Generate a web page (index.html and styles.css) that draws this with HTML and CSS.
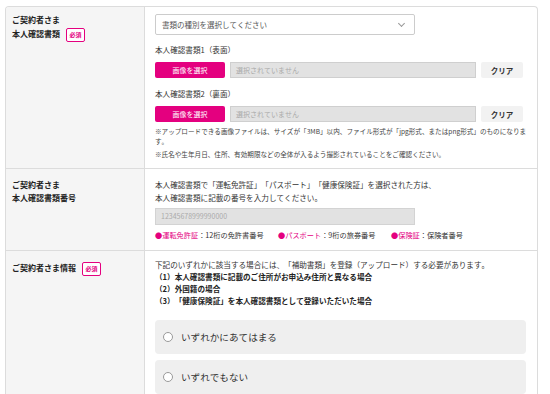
FILE: index.html
```html
<!DOCTYPE html>
<html lang="ja">
<head>
    <meta charset="UTF-8">
    <title>ご契約者さま情報</title>
    <link rel="stylesheet" href="styles.css">
</head>
<body>
    <div class="form-table">

        <!-- 本人確認書類 -->
        <div class="form-row row-docs">
            <div class="form-label">ご契約者さま<br>本人確認書類<span class="required">必須</span></div>
            <div class="form-body">
                <div class="select-box">
                    <span>書類の種別を選択してください</span>
                    <span class="chevron"></span>
                </div>

                <p class="file-title">本人確認書類1（表面）</p>
                <div class="file-row">
                    <button class="btn-pick">画像を選択</button>
                    <div class="file-name">選択されていません</div>
                    <button class="btn-clear">クリア</button>
                </div>

                <p class="file-title">本人確認書類2（裏面）</p>
                <div class="file-row">
                    <button class="btn-pick">画像を選択</button>
                    <div class="file-name">選択されていません</div>
                    <button class="btn-clear">クリア</button>
                </div>

                <p class="note">※アップロードできる画像ファイルは、サイズが「3MB」以内、ファイル形式が「jpg形式、またはpng形式」のものになりま<br>す。</p>
                <p class="note">※氏名や生年月日、住所、有効期限などの全体が入るよう撮影されていることをご確認ください。</p>
            </div>
        </div>

        <!-- 本人確認書類番号 -->
        <div class="form-row row-number">
            <div class="form-label">ご契約者さま<br>本人確認書類番号</div>
            <div class="form-body">
                <p class="text">本人確認書類で「運転免許証」「パスポート」「健康保険証」を選択された方は、<br>本人確認書類に記載の番号を入力してください。</p>
                <div class="number-input">12345678999990000</div>
                <div class="legend">
                    <span><em>●運転免許証</em>：12桁の免許書番号</span>
                    <span><em>●パスポート</em>：9桁の旅券番号</span>
                    <span><em>●保険証</em>：保険者番号</span>
                </div>
            </div>
        </div>

        <!-- ご契約者さま情報 -->
        <div class="form-row row-info">
            <div class="form-label">ご契約者さま情報<span class="required">必須</span></div>
            <div class="form-body">
                <p class="text">下記のいずれかに該当する場合には、「補助書類」を登録（アップロード）する必要があります。</p>
                <p class="text bold">（1）本人確認書類に記載のご住所がお申込み住所と異なる場合</p>
                <p class="text bold">（2）外国籍の場合</p>
                <p class="text bold">（3）「健康保険証」を本人確認書類として登録いただいた場合</p>

                <label class="radio-box"><span class="radio"></span>いずれかにあてはまる</label>
                <label class="radio-box"><span class="radio"></span>いずれでもない</label>
            </div>
        </div>

    </div>
</body>
</html>
```

FILE: styles.css
```css
* {
    margin: 0;
    padding: 0;
    box-sizing: border-box;
}

body {
    background: white;
    font-family: "Noto Sans CJK JP", "Noto Sans", sans-serif;
    color: #333;
    overflow: hidden;
    text-spacing-trim: space-all;
    font-kerning: none;
    font-feature-settings: "chws" 0, "halt" 0, "kern" 0;
}

.form-table {
    margin: 6px 0 0 5px;
    width: 533px;
    border: 1px solid #dcdcdc;
    border-bottom: none;
    border-radius: 4px 4px 0 0;
    overflow: hidden;
}

.form-row {
    display: grid;
    grid-template-columns: 139px 1fr;
    border-bottom: 1px solid #dcdcdc;
}

.form-label {
    background: #f5f5f5;
    border-right: 1px solid #dcdcdc;
    padding: 6px 6px 0 6px;
    font-size: 8px;
    line-height: 14px;
    font-weight: bold;
    color: #222;
}

.required {
    display: inline-block;
    margin-left: 6px;
    width: 19px;
    height: 14px;
    line-height: 12px;
    border: 1px solid #e4007f;
    border-radius: 2px;
    background: white;
    color: #e4007f;
    font-size: 6px;
    text-align: center;
    vertical-align: middle;
}

.form-body {
    padding: 7px 15px 9px 10px;
}

/* row 1 */
.select-box {
    width: 260px;
    height: 21px;
    border: 1px solid #ccc;
    border-radius: 2px;
    display: flex;
    align-items: center;
    justify-content: space-between;
    padding: 0 8px 0 6px;
    font-size: 7.5px;
    color: #555;
}

.chevron {
    width: 5px;
    height: 5px;
    border-right: 1px solid #999;
    border-bottom: 1px solid #999;
    transform: rotate(45deg);
    margin: -3px 2px 0 0;
}

.file-title {
    font-size: 7.6px;
    line-height: 12px;
    margin-top: 9px;
}

.file-row {
    display: flex;
    gap: 5px;
    margin-top: 6px;
    height: 16px;
}

.btn-pick {
    width: 70px;
    border: none;
    border-radius: 2px;
    background: #e4007f;
    color: white;
    font-family: inherit;
    font-size: 7px;
}

.file-name {
    width: 246px;
    background: #e2e2e2;
    border: 1px solid #cfcfcf;
    font-size: 7px;
    color: #aaa;
    line-height: 14px;
    padding-left: 5px;
}

.btn-clear {
    width: 42px;
    border: none;
    border-radius: 2px;
    background: #f2f2f2;
    font-family: inherit;
    font-size: 7.5px;
    font-weight: bold;
    color: #333;
}

.row-docs .file-row + .file-title {
    margin-top: 10px;
}

.note {
    font-size: 6.6px;
    line-height: 10px;
    margin-top: 4px;
    margin-right: -4px;
    color: #444;
}

.note + .note {
    margin-top: 3px;
}

/* row 2 */
.row-number .form-label,
.row-number .form-body {
    padding-top: 9px;
}

.row-number .form-label {
    line-height: 13px;
}

.text {
    font-size: 7.6px;
    line-height: 13px;
}

.number-input {
    width: 260px;
    height: 17px;
    margin-top: 4px;
    background: #e2e2e2;
    border: 1px solid #d3d3d3;
    font-size: 7px;
    line-height: 15px;
    color: #aaa;
    padding-left: 5px;
}

.legend {
    display: flex;
    margin-top: 4px;
    font-size: 7.2px;
    line-height: 12px;
}

.legend span:nth-child(1) { width: 123px; }
.legend span:nth-child(2) { width: 113px; }

.legend em {
    font-style: normal;
    color: #e4007f;
}

/* row 3 */
.row-info .form-label {
    padding-top: 10px;
}

.row-info .form-body {
    padding-top: 8px;
}

.row-info .text {
    line-height: 12px;
}

.bold {
    font-weight: bold;
    color: #222;
}

.radio-box {
    display: flex;
    align-items: center;
    height: 34px;
    width: 371px;
    margin-top: 6px;
    background: #efefef;
    border-radius: 4px;
    padding-left: 8px;
    font-size: 9.6px;
    color: #333;
}

.radio-box:first-of-type {
    margin-top: 13px;
}

.radio {
    width: 10px;
    height: 10px;
    border: 1px solid #999;
    border-radius: 50%;
    background: white;
    margin-right: 8px;
}
```
